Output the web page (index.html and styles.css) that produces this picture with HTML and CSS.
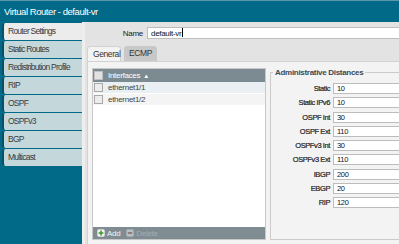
FILE: index.html
```html
<!DOCTYPE html>
<html lang="en">

<head>
    <meta charset="UTF-8">
    <meta name="viewport" content="width=device-width, initial-scale=1.0">
    <title>Virtual Router - default-vr</title>
    <link rel="stylesheet" href="styles.css">
</head>

<body>
    <div class="window">
        <div class="titlebar">Virtual Router - default-vr</div>
        <div class="frame">
            <nav class="sidebar">
                <div class="nav-item active">Router Settings</div>
                <div class="nav-item">Static Routes</div>
                <div class="nav-item">Redistribution Profile</div>
                <div class="nav-item">RIP</div>
                <div class="nav-item">OSPF</div>
                <div class="nav-item">OSPFv3</div>
                <div class="nav-item">BGP</div>
                <div class="nav-item">Multicast</div>
            </nav>
            <main class="content">
                <div class="name-row">
                    <label class="name-label">Name</label>
                    <div class="text-input">default-vr<span class="caret"></span></div>
                </div>
                <div class="tabs">
                    <div class="tab active">General</div>
                    <div class="tab">ECMP</div>
                </div>
                <div class="tab-panel">
                    <div class="grid">
                        <div class="grid-head"><span class="check"></span>Interfaces <span class="sort">&#9650;</span></div>
                        <div class="grid-row selected"><span class="check"></span>ethernet1/1</div>
                        <div class="grid-row"><span class="check"></span>ethernet1/2</div>
                        <div class="grid-fill"></div>
                        <div class="grid-foot">
                            <span class="foot-btn">
                                <svg width="8" height="8" viewBox="0 0 8 8"><rect x="0.5" y="0.5" width="7" height="7" rx="1.5" fill="#f4f4f4" stroke="#d0d0d0"/><path d="M4 1.6v4.8M1.6 4h4.8" stroke="#3a9a2a" stroke-width="1.6"/></svg>
                                Add
                            </span>
                            <span class="foot-btn disabled">
                                <svg width="8" height="8" viewBox="0 0 8 8"><rect x="0.5" y="0.5" width="7" height="7" rx="1.5" fill="#b9c0c3" stroke="#a4adb1"/><path d="M1.8 4h4.4" stroke="#8b6a6a" stroke-width="1.6"/></svg>
                                Delete
                            </span>
                        </div>
                    </div>
                    <fieldset class="distances">
                        <legend>Administrative Distances</legend>
                        <div class="field"><label>Static</label><div class="num">10</div></div>
                        <div class="field"><label>Static IPv6</label><div class="num">10</div></div>
                        <div class="field"><label>OSPF Int</label><div class="num">30</div></div>
                        <div class="field"><label>OSPF Ext</label><div class="num">110</div></div>
                        <div class="field"><label>OSPFv3 Int</label><div class="num">30</div></div>
                        <div class="field"><label>OSPFv3 Ext</label><div class="num">110</div></div>
                        <div class="field"><label>IBGP</label><div class="num">200</div></div>
                        <div class="field"><label>EBGP</label><div class="num">20</div></div>
                        <div class="field"><label>RIP</label><div class="num">120</div></div>
                    </fieldset>
                </div>
            </main>
        </div>
    </div>
</body>

</html>
```

FILE: styles.css
```css
body {
    margin: 0;
    overflow: hidden;
    font-family: "Liberation Sans", Arial, sans-serif;
    font-size: 8px;
    letter-spacing: -0.3px;
    color: #333;
}

.window {
    width: 399px;
    height: 244px;
    overflow: hidden;
    display: flex;
    flex-direction: column;
}

.titlebar {
    height: 21px;
    line-height: 21px;
    border-top: 1px solid #5d97ab;
    background-color: #016a89;
    color: #fff;
    font-size: 9.5px;
    letter-spacing: -0.45px;
    padding-left: 4px;
}

.frame {
    flex: 1;
    display: flex;
    min-width: 0;
}

.sidebar {
    width: 82px;
    flex-shrink: 0;
    background-color: #016a89;
    padding-top: 1px;
}

.nav-item {
    height: 17px;
    line-height: 17px;
    margin: 0 0 1px 2px;
    padding-left: 4px;
    background-color: #c4d8dc;
    border-left: 2px solid #0b4e66;
    border-radius: 3px 0 0 3px;
    font-size: 8.5px;
    letter-spacing: -0.75px;
    color: #3a3a3a;
    white-space: nowrap;
    overflow: hidden;
}

.nav-item.active {
    background-color: #ececec;
}

.content {
    width: 340px;
    flex-shrink: 0;
    display: flex;
    flex-direction: column;
    background-color: #e3e3e3;
    border-left: 3px solid #eeeeee;
}

.name-row {
    display: flex;
    align-items: center;
    margin-top: 5px;
}

.name-label {
    width: 58px;
    text-align: right;
    margin-right: 4px;
    color: #222;
}

.text-input {
    flex: 1;
    height: 12px;
    box-sizing: border-box;
    line-height: 10px;
    padding-left: 3px;
    background-color: #fff;
    border: 1px solid #bdbdbd;
    border-right: none;
    color: #111;
}

.caret {
    display: inline-block;
    width: 1px;
    height: 9px;
    margin-left: 1px;
    background-color: #000;
    vertical-align: -1px;
}

.tabs {
    display: flex;
    gap: 3px;
    margin: 7px 0 0 2px;
}

.tab {
    height: 15px;
    line-height: 15px;
    padding: 0 5px;
    background-color: #c8c8c8;
    border-radius: 3px 3px 0 0;
    font-size: 8.5px;
    letter-spacing: -0.4px;
}

.tab.active {
    width: 22px;
    background-color: #f3f3f3;
    border: 1px solid #d2d2d2;
    border-bottom: none;
    height: 14px;
}

.tab-panel {
    flex: 1;
    display: flex;
    gap: 4px;
    margin-left: 2px;
    padding: 6px 0 4px 4px;
    background-color: #f3f3f3;
    border-left: 1px solid #d2d2d2;
    border-top: 1px solid #d2d2d2;
}

.grid {
    width: 172px;
    flex-shrink: 0;
    display: flex;
    flex-direction: column;
    background-color: #fff;
    border: 1px solid #c8c8c8;
}

.grid-head {
    height: 13px;
    display: flex;
    align-items: center;
    background-color: #7b8b91;
    color: #fff;
}

.grid-row {
    height: 12px;
    display: flex;
    align-items: center;
    background-color: #f4f4f4;
    border-bottom: 1px solid #fff;
    box-sizing: border-box;
    color: #444;
}

.grid-row.selected {
    background-color: #e9eff2;
}

.check {
    width: 7px;
    height: 7px;
    margin: 0 5px 0 1px;
    background-color: #ececec;
    border: 1px solid #a9a9a9;
}

.grid-head .check {
    background-color: #e2e2e2;
    border-color: #c0c0c0;
}

.sort {
    margin-left: 3px;
    font-size: 6px;
}

.grid-fill {
    flex: 1;
}

.grid-foot {
    height: 12px;
    display: flex;
    align-items: center;
    gap: 6px;
    padding-left: 4px;
    background-color: #7f8c91;
    color: #f4f4f4;
}

.foot-btn {
    display: flex;
    align-items: center;
    gap: 2px;
}

.foot-btn.disabled {
    color: #a3adb1;
}

.distances {
    flex: 1;
    margin: 0;
    padding: 6px 0 0 2px;
    border: 1px solid #cbcbcb;
    border-right: none;
}

.distances legend {
    padding: 0 2px;
    font-weight: bold;
    color: #3c4a55;
}

.field {
    display: flex;
    align-items: center;
    height: 11px;
    margin-bottom: 3.25px;
}

.field label {
    width: 57px;
    padding-right: 3px;
    text-align: right;
    font-size: 7.5px;
    letter-spacing: -0.4px;
    color: #222;
    -webkit-text-stroke: 0.2px #222;
}

.num {
    width: 90px;
    height: 11px;
    box-sizing: border-box;
    line-height: 9px;
    padding-left: 3px;
    background-color: #fff;
    border: 1px solid #bcbcbc;
    font-size: 7.5px;
    color: #111;
}
```
